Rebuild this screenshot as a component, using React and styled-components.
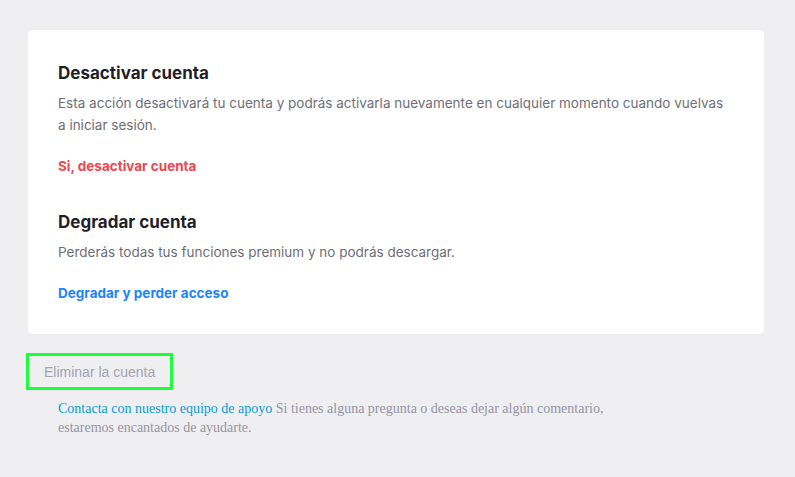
import * as React from 'react'
import styled, { createGlobalStyle } from 'styled-components'

const GlobalStyle = createGlobalStyle`
  html, body {
    margin: 0;
    padding: 0;
    background: #efeff1;
  }
`

const Page = styled.div`
  padding: 30px 31px 40px 28px;
  display: flex;
  flex-direction: column;
`

const Card = styled.section`
  background: #ffffff;
  border-radius: 5px;
  padding: 32px 30px 31px 30px;
  display: flex;
  flex-direction: column;
  gap: 35px;
`

const Block = styled.div`
  display: flex;
  flex-direction: column;
`

const Title = styled.h2`
  margin: 0;
  font-family: Inter, 'Noto Sans', sans-serif;
  font-size: 17px;
  font-weight: 700;
  line-height: 22px;
  color: #1f1f2b;
`

const Text = styled.p`
  margin: 8px 0 0;
  font-family: Inter, 'Noto Sans', sans-serif;
  font-size: 13.5px;
  line-height: 22px;
  color: #6e6e78;
`

const Action = styled.a`
  margin-top: 20px;
  font-family: Inter, 'Noto Sans', sans-serif;
  font-size: 13.5px;
  font-weight: 700;
  line-height: 20px;
  color: ${(p) => (p.$tone === 'danger' ? '#f2454f' : '#1a84ff')};
  cursor: pointer;
`

const DeleteButton = styled.button`
  align-self: flex-start;
  margin: 19px 0 0 -2px;
  padding: 0 15px;
  height: 37px;
  background: transparent;
  border: 3px solid #1bff3b;
  font-family: 'Liberation Sans', Arial, sans-serif;
  font-size: 14px;
  color: #a3a3b4;
  cursor: pointer;
`

const Help = styled.p`
  margin: 9px 0 0 30px;
  max-width: 560px;
  font-family: 'Liberation Serif', 'Times New Roman', serif;
  font-size: 14px;
  line-height: 19px;
  color: #9494a6;
`

const HelpLink = styled.a`
  color: #0a9ad8;
  cursor: pointer;
`

export default function App() {
  return (
    <>
      <GlobalStyle />
      <Page>
        <Card>
          <Block>
            <Title>Desactivar cuenta</Title>
            <Text>
              Esta acción desactivará tu cuenta y podrás activarla nuevamente en cualquier
              momento cuando vuelvas a iniciar sesión.
            </Text>
            <Action $tone="danger">Si, desactivar cuenta</Action>
          </Block>
          <Block>
            <Title>Degradar cuenta</Title>
            <Text>Perderás todas tus funciones premium y no podrás descargar.</Text>
            <Action>Degradar y perder acceso</Action>
          </Block>
        </Card>
        <DeleteButton>Eliminar la cuenta</DeleteButton>
        <Help>
          <HelpLink>Contacta con nuestro equipo de apoyo</HelpLink> Si tienes alguna pregunta
          o deseas dejar algún comentario, estaremos encantados de ayudarte.
        </Help>
      </Page>
    </>
  )
}
